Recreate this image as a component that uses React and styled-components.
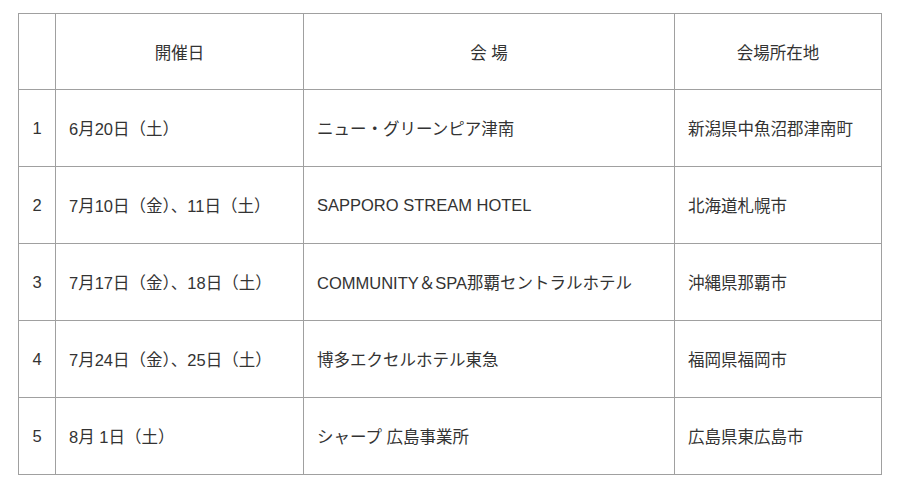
import styled, { createGlobalStyle } from "styled-components";

const GlobalStyle = createGlobalStyle`
  body {
    margin: 0;
    background: #fff;
    font-family: "Liberation Sans", Arial, "Noto Sans CJK JP", sans-serif;
  }
`;

const Page = styled.div`
  padding: 13px 19px 0 18px;
`;

const Table = styled.table`
  width: 863px;
  border-collapse: collapse;
  table-layout: fixed;
  color: #333;
  font-size: 16.5px;
`;

const Cell = styled.td`
  height: 76px;
  border: 1px solid #a0a0a0;
  padding: 0 0 0 ${({ $center }) => ($center ? "0" : "13px")};
  text-align: ${({ $center }) => ($center ? "center" : "left")};
  vertical-align: middle;
  white-space: nowrap;
`;

const HeadCell = styled.th`
  height: 75px;
  border: 1px solid #a0a0a0;
  font-weight: normal;
  text-align: center;
  vertical-align: middle;
  padding: 0;
`;

const ROWS = [
  ["6月20日（土）", "ニュー・グリーンピア津南", "新潟県中魚沼郡津南町"],
  ["7月10日（金）、11日（土）", "SAPPORO STREAM HOTEL", "北海道札幌市"],
  ["7月17日（金）、18日（土）", "COMMUNITY＆SPA那覇セントラルホテル", "沖縄県那覇市"],
  ["7月24日（金）、25日（土）", "博多エクセルホテル東急", "福岡県福岡市"],
  ["8月 1日（土）", "シャープ 広島事業所", "広島県東広島市"],
];

export default function App() {
  return (
    <>
      <GlobalStyle />
      <Page>
        <Table>
          <colgroup>
            <col style={{ width: 37 }} />
            <col style={{ width: 248 }} />
            <col style={{ width: 371 }} />
            <col style={{ width: 207 }} />
          </colgroup>
          <thead>
            <tr>
              <HeadCell />
              <HeadCell>開催日</HeadCell>
              <HeadCell>会 場</HeadCell>
              <HeadCell>会場所在地</HeadCell>
            </tr>
          </thead>
          <tbody>
            {ROWS.map(([date, venue, place], i) => (
              <tr key={i}>
                <Cell $center>{i + 1}</Cell>
                <Cell>{date}</Cell>
                <Cell>{venue}</Cell>
                <Cell>{place}</Cell>
              </tr>
            ))}
          </tbody>
        </Table>
      </Page>
    </>
  );
}
